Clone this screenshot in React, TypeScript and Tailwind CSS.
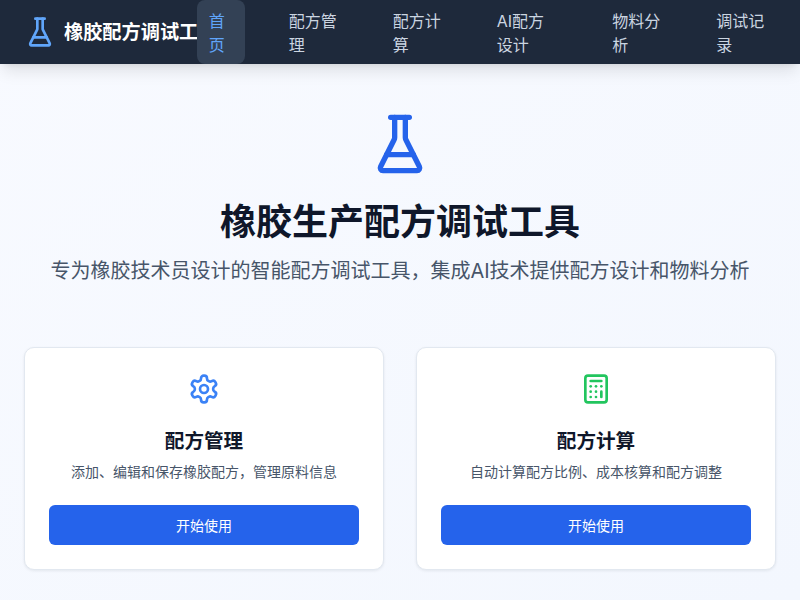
import { Calculator } from "lucide-react";
import clsx from "clsx";

const NAV = ["首页", "配方管理", "配方计算", "AI配方设计", "物料分析", "调试记录"];

function Flask({ className }: { className: string }) {
  return (
    <svg viewBox="0 0 24 24" fill="none" stroke="currentColor" strokeWidth="2" strokeLinecap="round" strokeLinejoin="round" className={className}>
      <path d="M10 2v7.527a2 2 0 0 1-.211.896L4.72 20.55a1 1 0 0 0 .9 1.45h12.76a1 1 0 0 0 .9-1.45l-5.069-10.127A2 2 0 0 1 14 9.527V2" />
      <path d="M8.5 2h7" />
      <path d="M7 16h10" />
    </svg>
  );
}

function Gear({ className }: { className: string }) {
  return (
    <svg viewBox="0 0 24 24" fill="none" stroke="currentColor" strokeWidth="2" strokeLinecap="round" strokeLinejoin="round" className={className}>
      <path d="M12.22 2h-.44a2 2 0 0 0-2 2v.18a2 2 0 0 1-1 1.73l-.43.25a2 2 0 0 1-2 0l-.15-.08a2 2 0 0 0-2.73.73l-.22.38a2 2 0 0 0 .73 2.73l.15.1a2 2 0 0 1 1 1.72v.51a2 2 0 0 1-1 1.74l-.15.09a2 2 0 0 0-.73 2.73l.22.38a2 2 0 0 0 2.73.73l.15-.08a2 2 0 0 1 2 0l.43.25a2 2 0 0 1 1 1.73V20a2 2 0 0 0 2 2h.44a2 2 0 0 0 2-2v-.18a2 2 0 0 1 1-1.73l.43-.25a2 2 0 0 1 2 0l.15.08a2 2 0 0 0 2.73-.73l.22-.39a2 2 0 0 0-.73-2.73l-.15-.08a2 2 0 0 1-1-1.74v-.5a2 2 0 0 1 1-1.74l.15-.09a2 2 0 0 0 .73-2.73l-.22-.38a2 2 0 0 0-2.73-.73l-.15.08a2 2 0 0 1-2 0l-.43-.25a2 2 0 0 1-1-1.73V4a2 2 0 0 0-2-2z" />
      <circle cx="12" cy="12" r="3" />
    </svg>
  );
}

const CARDS = [
  {
    title: "配方管理",
    desc: "添加、编辑和保存橡胶配方，管理原料信息",
    icon: <Gear className="h-8 w-8 text-[#3b82f6]" />,
  },
  {
    title: "配方计算",
    desc: "自动计算配方比例、成本核算和配方调整",
    icon: <Calculator className="h-8 w-8 text-[#22c55e]" />,
  },
];

export default function App() {
  return (
    <div className="h-[600px] overflow-hidden bg-gradient-to-br from-[#f8faff] to-[#f3f7fe] font-['Inter','Noto_Sans_CJK_SC',sans-serif] text-[#0f172a]">
      <header className="relative flex h-16 items-center bg-[#1e293b] px-6 shadow-lg">
        <div className="flex w-[172.75px] shrink-0 items-center gap-2 overflow-hidden">
          <Flask className="h-8 w-8 shrink-0 text-[#60a5fa]" />
          <span className="mt-px whitespace-nowrap text-[19.2px] font-bold text-white">橡胶配方调试工具</span>
        </div>
        <ul className="-mr-[0.25px] flex min-w-0 flex-1 gap-8">
          {NAV.map((item, i) => (
            <li
              key={item}
              className={clsx(
                "rounded-lg px-3 pt-[9px] pb-[7px] text-base",
                i === 0 ? "bg-[#334155] text-[#60a5fa]" : "text-[#cbd5e1]",
              )}
            >
              {item}
            </li>
          ))}
        </ul>
      </header>

      <main className="px-6">
        <section className="flex flex-col items-center pt-[48px] text-center">
          <Flask className="h-16 w-16 text-[#2563eb]" />
          <h1 className="mt-[26px] text-4xl font-bold">橡胶生产配方调试工具</h1>
          <p className="mt-[15px] text-xl text-[#475569]">
            专为橡胶技术员设计的智能配方调试工具，集成AI技术提供配方设计和物料分析
          </p>
        </section>

        <section className="mt-[62px] grid grid-cols-2 gap-8">
          {CARDS.map((card) => (
            <div
              key={card.title}
              className="flex flex-col items-center rounded-[10px] border border-[#e2e8f0] bg-white p-6 text-center shadow-[0_1px_3px_rgba(15,23,42,0.08)]"
            >
              <div className="mt-px">{card.icon}</div>
              <h2 className="mt-[22px] text-[19.6px] leading-[29px] font-bold">{card.title}</h2>
              <p className="mt-[5px] text-sm leading-[21px] text-[#475569]">{card.desc}</p>
              <button className="mt-[23px] h-10 w-full rounded-md bg-[#2563eb] pt-px text-sm text-white">开始使用</button>
            </div>
          ))}
        </section>
      </main>
    </div>
  );
}
